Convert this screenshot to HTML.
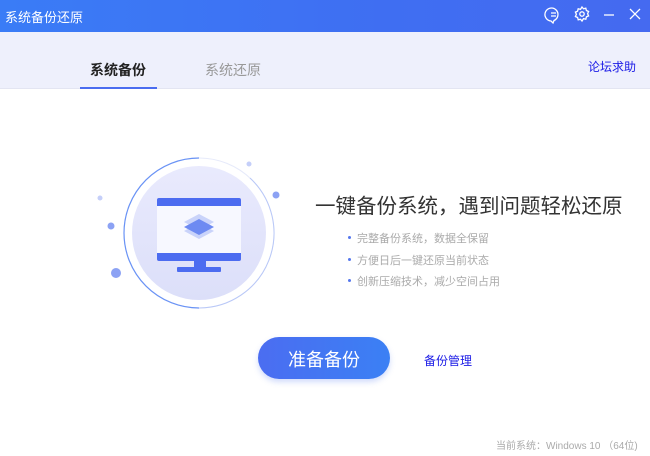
<!DOCTYPE html>
<html><head><meta charset="utf-8"><style>
*{margin:0;padding:0;box-sizing:border-box}
body{width:650px;height:456px;overflow:hidden;background:#fff;font-family:"Liberation Sans","Noto Sans CJK SC",sans-serif;position:relative}
.t{position:absolute;white-space:nowrap}
</style></head><body>
<div style="position:absolute;left:0;top:0;width:650px;height:32px;background:linear-gradient(90deg,#3a7cf6,#3f6ef2 60%,#456af0)"></div>
<div class="t" style="left:5px;top:7px;font-size:13px;color:#fff">系统备份还原</div>
<svg style="position:absolute;left:540px;top:4px" width="110" height="22" viewBox="0 0 110 22">
<g fill="none" stroke="#fff" stroke-width="1.3">
<path d="M14 16.5a6.5 6.5 0 1 0-3 .5l2 2z"/><path d="M11 9h5M11 12h5"/>
<circle cx="42" cy="10" r="2.2"/><path d="M42 3l1.5 1.8 2.3-.6.6 2.3 2.2 1-1 2.2 1 2.2-2.2 1-.6 2.3-2.3-.6L42 17l-1.5-1.8-2.3.6-.6-2.3-2.2-1 1-2.2-1-2.2 2.2-1 .6-2.3 2.3.6z"/>
<path d="M64 11h10"/><path d="M90 5l10 10M100 5l-10 10"/></g></svg>
<div style="position:absolute;left:0;top:32px;width:650px;height:57px;background:#eef0fc;border-bottom:1px solid #e3e5f2"></div>
<div class="t" style="left:90px;top:60px;font-size:14px;font-weight:bold;color:#222">系统备份</div>
<div style="position:absolute;left:80px;top:87px;width:77px;height:2px;background:#4a6cf0"></div>
<div class="t" style="left:205px;top:60px;font-size:14px;color:#999">系统还原</div>
<div class="t" style="left:588px;top:58px;font-size:12px;color:#1a1ae6">论坛求助</div>
<svg style="position:absolute;left:90px;top:150px" width="220" height="170">
<defs><linearGradient id="g" x1="0" y1="0" x2="0" y2="1"><stop offset="0" stop-color="#e9eafd"/><stop offset="1" stop-color="#dcdff9"/></linearGradient></defs>
<circle cx="109" cy="83" r="75" fill="#fff" stroke="#e6eafa" stroke-width="1"/>
<path d="M109 8A75 75 0 0 0 109 158" fill="none" stroke="#6a93f5" stroke-width="1.2"/>
<path d="M109 158A75 75 0 0 0 160 28" fill="none" stroke="#b9c8f7" stroke-width="1"/>
<circle cx="109" cy="83" r="67" fill="url(#g)"/>
<rect x="67" y="48" width="84" height="63" rx="2" fill="#4c6cf0"/>
<rect x="67" y="56" width="84" height="47" fill="#f7f8ff"/>
<rect x="104" y="111" width="12" height="7" fill="#4c6cf0"/>
<rect x="87" y="117" width="44" height="5" rx="1" fill="#4c6cf0"/>
<path d="M109 64l15 8-15 8-15-8z" fill="#c9d3fa"/>
<path d="M109 73l15 8-15 8-15-8z" fill="#c9d3fa"/>
<path d="M109 69l15 8-15 8-15-8z" fill="#6d8af2"/>
<circle cx="159" cy="14" r="2.5" fill="#c5cff9"/>
<circle cx="186" cy="45" r="3.5" fill="#8ca2f4"/>
<circle cx="10" cy="48" r="2.5" fill="#c5cff9"/>
<circle cx="21" cy="76" r="3.5" fill="#8ca2f4"/>
<circle cx="26" cy="123" r="5" fill="#8ca2f4"/>
</svg>
<div class="t" style="left:315px;top:189px;font-size:20.5px;color:#333">一键备份系统，遇到问题轻松还原</div>
<div style="position:absolute;left:348px;top:236px;width:3px;height:3px;border-radius:50%;background:#5577ee"></div>
<div style="position:absolute;left:348px;top:258px;width:3px;height:3px;border-radius:50%;background:#5577ee"></div>
<div style="position:absolute;left:348px;top:279px;width:3px;height:3px;border-radius:50%;background:#5577ee"></div>
<div class="t" style="left:357px;top:230px;font-size:11px;color:#aaa">完整备份系统，数据全保留</div>
<div class="t" style="left:357px;top:252px;font-size:11px;color:#aaa">方便日后一键还原当前状态</div>
<div class="t" style="left:357px;top:273px;font-size:11px;color:#aaa">创新压缩技术，减少空间占用</div>
<div style="position:absolute;left:258px;top:337px;width:132px;height:42px;border-radius:21px;background:linear-gradient(90deg,#4b6df1,#3b80f4);box-shadow:0 3px 6px rgba(70,110,240,.25)"></div>
<div class="t" style="left:258px;top:346px;width:132px;text-align:center;font-size:18px;color:#fff">准备备份</div>
<div class="t" style="left:424px;top:352px;font-size:12px;color:#1a1ae6">备份管理</div>
<div class="t" style="left:496px;top:437px;font-size:10px;color:#aaa">当前系统：Windows 10 （64位)</div>
</body></html>
